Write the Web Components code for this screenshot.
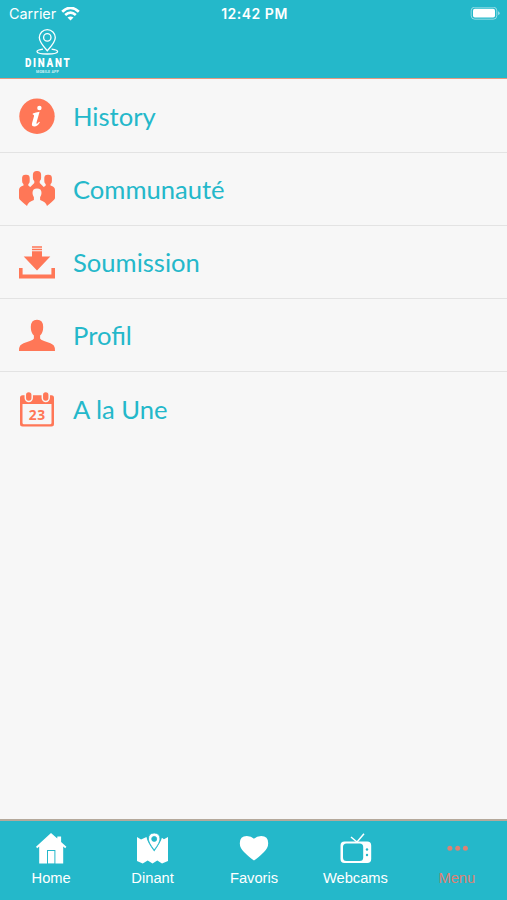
<!DOCTYPE html>
<html lang="fr">
<head>
<meta charset="utf-8">
<title>Dinant</title>
<style>
body {
  margin: 0;
  height: 900px;
  overflow: hidden;
  --teal: #24b8ca;
  --coral: #ff7757;
  --paper: #f7f7f7;
}
</style>
</head>
<body>
<dinant-app></dinant-app>

<script>
const ICONS = {
  info: `<circle cx="18" cy="18.200" r="17.700"/>
    <g fill="#fff"><circle cx="20.400" cy="10" r="2.200"/>
    <path d="M13.800 15.400q3-.8 6.800-1.600l-3 10.400q-.5 1.800.4 1.500 1-.4 2-2l.9.6q-2.500 4.300-5.400 4.300-3.400-.1-2.400-3.600l1.900-6.800q.5-1.600-1.300-1.600z"/></g>`,
  community: `<rect x="3.100" y="3.700" width="7.600" height="9.800" rx="3.400"/><rect x="25.300" y="3.700" width="7.600" height="9.800" rx="3.400"/>
    <rect x="13.900" y="0" width="8.200" height="10.600" rx="3.800"/>
    <path d="M4.500 11h4.800v3.500q.7.900 2 1.500l4-4V8h5.400v4l4 4q1.300-.6 2-1.500V11h4.800v3.500Q36 15.800 36 19v8.300q-.5 1.800-8 7.700-.8-3.900-6.900-6v-2.800q1.400-1.900 1.400-4.200 0-4.400-4.500-4.400t-4.500 4.400q0 2.300 1.400 4.200V29Q8.800 31.100 8 35 .5 29.100 0 27.300V19q0-3.200 4.500-4.500z"/>`,
  download: `<path d="M13 2.200h10v1.500H13zm0 2.500h10v1.500H13zm0 2.500h10v5.300h8.300L18 26.500 4.700 12.500H13zM0 24h3.600v6.600h28.800V24H36v10.500H0z"/>`,
  person: `<path d="M18 2.700q6.200 0 6.200 7.300 0 5.500-3.100 8.600v3q.3 1.200 4 2.300 7.900 2.300 9.700 4.600Q36 30.100 36 33.900H0q0-3.800 1.200-5.400 1.800-2.300 9.700-4.600 3.700-1.100 4-2.300v-3q-3.100-3.100-3.100-8.600 0-7.300 6.200-7.300z"/>`,
  calendar: `<path fill-rule="evenodd" d="M3.500 4.300h29q2.500 0 2.500 2.500v26.200q0 2.500-2.500 2.500h-29Q1 35.500 1 33V6.800q0-2.500 2.500-2.500zM3.500 13v18.700q0 1.500 1.500 1.500h26q1.500 0 1.500-1.500V13z"/>
    <g stroke="#f7f7f7" stroke-width="1.500"><rect x="6.300" y=".5" width="6.900" height="10" rx="3.400"/><rect x="23.300" y=".5" width="6.900" height="10" rx="3.400"/></g>
    <text x="18" y="28.600" text-anchor="middle" textLength="16.500" font-family="Open Sans" font-size="13.800" font-weight="700">23</text>`,
  home: `<path d="M15 0L0 13.800l1.200 1.400 2-1.800v17H11V17h8.400v13.400h7.800v-17l2 1.800 1.200-1.400-5.300-4.900V3.600h-3.800v1.800z"/><path d="M12 18h6.400v12.400H12z"/>`,
  map: `<path d="M0 4l4 2.500L9.500 4q.6 5 7.700 14.500Q24 9 24.900 4.800l2 1.500L31 4v24l-6 2.500-4.700-3-4.800 3-4.800-3-5 3L0 28z"/>
    <path fill-rule="evenodd" stroke="#24b8ca" stroke-width=".8" d="M17.200 0q5.800.2 5.800 6 0 3.500-5.800 11-5.800-7.500-5.800-11 0-5.800 5.800-6zm0 3.400a2.500 2.500 0 1 0 0 5 2.500 2.500 0 1 0 0-5z"/>`,
  heart: `<path d="M15 27.500Q11 25 5 19 .8 14.800.8 10.200.8 3 7.800 3q4.500 0 7.200 2.800Q17.700 3 22.200 3q7 0 7 7.200 0 4.600-4.200 8.800-6 6-10 8.500z"/>`,
  tv: `<path fill-rule="evenodd" d="M4.500 8.500h22.700q4 0 4 4V26q0 4-4 4H4.500q-4 0-4-4V12.500q0-4 4-4zm2 2Q3 10.500 3 14v10.500Q3 28 6.500 28h13.200q3.500 0 3.500-3.500V14q0-3.500-3.500-3.500z"/>
    <path d="M11 4l6 5 7-8.200" fill="none" stroke="currentColor" stroke-width="1.500"/>
    <g fill="#24b8ca"><circle cx="27" cy="16.500" r="1.200"/><circle cx="27" cy="22" r="1.200"/></g>`,
  dots: `<circle cx="7.900" cy="15.300" r="2.500"/><circle cx="15.700" cy="15.300" r="2.500"/><circle cx="23.400" cy="15.300" r="2.500"/>`
};

function attach (el, html) {
  el.attachShadow({ mode: 'open' }).innerHTML = html;
}

class AppIcon extends HTMLElement {
  connectedCallback () {
    const w = this.getAttribute('width') || 36;
    const h = this.getAttribute('height') || 36;
    attach(this, `
      <style>
        :host { display: block; flex: none; }
        svg { display: block; overflow: visible; }
      </style>
      <svg width="${w}" height="${h}" viewBox="0 0 ${w} ${h}" fill="currentColor">${ICONS[this.getAttribute('name')]}</svg>`);
  }
}
customElements.define('app-icon', AppIcon);

class StatusBar extends HTMLElement {
  connectedCallback () {
    attach(this, `
      <style>
        :host {
          display: grid;
          grid-template-columns: 1fr auto 1fr;
          align-items: center;
          height: 27px;
          padding: 0 7px 0 9px;
          font: 14.400px/27px Inter, sans-serif;
        }
        .carrier { display: flex; align-items: center; gap: 5px; }
        time { font-weight: 600; font-size: 14px; letter-spacing: .5px; }
        .battery { justify-self: end; }
        svg { display: block; }
      </style>
      <div class="carrier">
        <span>Carrier</span>
        <svg width="19" height="14" viewBox="0 0 19 14" fill="none" stroke="#fff" stroke-width="2.700">
          <path d="M1.200 4.700q8.300-7.600 16.600 0M4.200 8.100q5.300-4.800 10.600 0"/>
          <path d="M6.500 10.600q3-2.400 6 0l-3 2.900z" fill="#fff" stroke="none"/>
        </svg>
      </div>
      <time>12:42 PM</time>
      <svg class="battery" width="30" height="14" viewBox="0 0 30 14">
        <rect x="1.200" y=".2" width="25.600" height="12" rx="3.500" fill="none" stroke="#fff" stroke-opacity=".5"/>
        <rect x="3" y="1.800" width="22" height="8.800" rx="1.800" fill="#fff"/>
        <path d="M28 4.300q1.700.5 1.700 1.900T28 8.100z" fill="#fff" fill-opacity=".5"/>
      </svg>`);
  }
}
customElements.define('status-bar', StatusBar);

class DinantLogo extends HTMLElement {
  connectedCallback () {
    attach(this, `
      <style>
        :host { display: block; padding-left: 24px; }
        svg { display: block; }
      </style>
      <svg width="47" height="48" viewBox="0 0 47 48" fill="#fff">
        <g fill="none" stroke="#fff" stroke-width="1.300">
          <path d="M23.300 23.800Q15.300 15.200 15.300 10.600a8 8 0 0 1 16 0q0 4.600-8 13.200z"/>
          <circle cx="23.300" cy="10.400" r="3.700"/>
          <path d="M19 22.100q-6 .8-6 2.400 0 2.500 10.300 2.500t10.300-2.500q0-1.600-6-2.400"/>
        </g>
        <text transform="translate(1 39.500) scale(.8 1)" textLength="56" font-family="Roboto" font-size="12.300" font-weight="900">DINANT</text>
        <text x="12" y="45.800" textLength="23" font-family="Roboto" font-size="3.700" font-weight="700" fill-opacity=".8">MOBILE APP</text>
      </svg>`);
  }
}
customElements.define('dinant-logo', DinantLogo);

class MenuRow extends HTMLElement {
  connectedCallback () {
    attach(this, `
      <style>
        :host {
          display: flex;
          align-items: center;
          gap: 18px;
          box-sizing: border-box;
          height: 73.200px;
          padding-left: 19px;
          border-bottom: 1px solid #e3e3e3;
          color: var(--teal);
          font: 25.600px/36px Lato, sans-serif;
        }
        :host(:last-of-type) { border-color: transparent; }
        app-icon { color: var(--coral); }
      </style>
      <app-icon name="${this.getAttribute('icon')}"></app-icon>
      <span><slot></slot></span>`);
  }
}
customElements.define('menu-row', MenuRow);

class TabItem extends HTMLElement {
  connectedCallback () {
    attach(this, `
      <style>
        :host {
          display: flex;
          flex-direction: column;
          align-items: center;
          gap: 5px;
          padding: 12px 0 0 1px;
          color: #fff;
          font: 14.700px/18px "Liberation Sans", Arial, sans-serif;
        }
        :host([active]) { color: #dc8274; }
      </style>
      <app-icon name="${this.getAttribute('icon')}" width="${this.getAttribute('size') || 30}" height="31"></app-icon>
      <span><slot></slot></span>`);
  }
}
customElements.define('tab-item', TabItem);

class DinantApp extends HTMLElement {
  connectedCallback () {
    attach(this, `
      <style>
        :host {
          display: flex;
          flex-direction: column;
          height: 900px;
          background: var(--paper);
        }
        header {
          box-sizing: border-box;
          height: 79px;
          background: var(--teal);
          border-bottom: 1px solid #e59a80;
          color: #fff;
        }
        main { flex: 1; min-height: 0; padding-top: .7px; }
        nav {
          display: grid;
          grid-template-columns: repeat(5, 1fr);
          box-sizing: border-box;
          height: 81px;
          background: var(--teal);
          border-top: 2px solid #b5a99b;
        }
      </style>
      <header>
        <status-bar></status-bar>
        <dinant-logo></dinant-logo>
      </header>
      <main>
        <menu-row icon="info">History</menu-row>
        <menu-row icon="community">Communauté</menu-row>
        <menu-row icon="download">Soumission</menu-row>
        <menu-row icon="person">Profil</menu-row>
        <menu-row icon="calendar">A la Une</menu-row>
      </main>
      <nav>
        <tab-item icon="home">Home</tab-item>
        <tab-item icon="map" size="31">Dinant</tab-item>
        <tab-item icon="heart">Favoris</tab-item>
        <tab-item icon="tv" size="31">Webcams</tab-item>
        <tab-item icon="dots" active>Menu</tab-item>
      </nav>`);
  }
}
customElements.define('dinant-app', DinantApp);
</script>
</body>
</html>
